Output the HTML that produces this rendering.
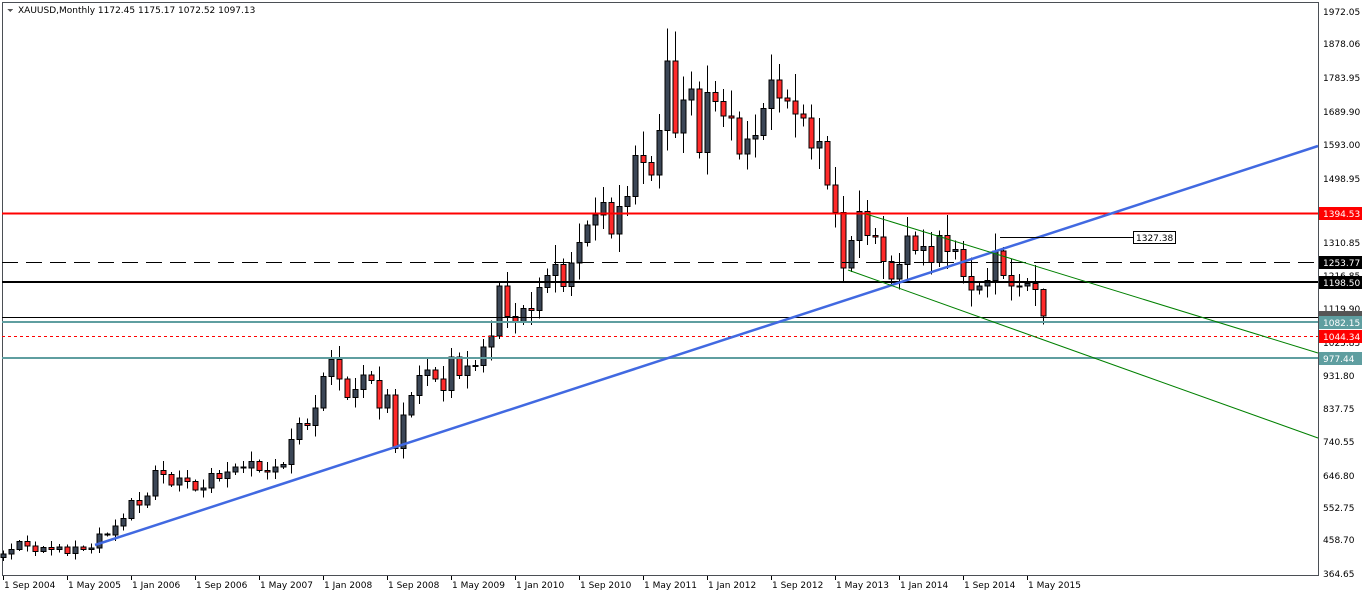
<!DOCTYPE html>
<html><head><meta charset="utf-8">
<style>
html,body{margin:0;padding:0;background:#fff;}
body{width:1362px;height:594px;overflow:hidden;position:relative;font-family:"DejaVu Sans","Liberation Sans",sans-serif;}
svg{position:absolute;left:0;top:0;}
text{font-family:"DejaVu Sans","Liberation Sans",sans-serif;font-size:9px;fill:#000;}
</style></head><body>
<svg id="s" width="1362" height="594" xmlns="http://www.w3.org/2000/svg" shape-rendering="crispEdges">
<rect x="2.5" y="2.5" width="1316" height="573" fill="#fff" stroke="#4b4f55"/>
<g id="candles"></g>
<line x1="2" y1="213.5" x2="1318" y2="213.5" stroke="#ff0000" stroke-width="2"/>
<line x1="2" y1="262.5" x2="1318" y2="262.5" stroke="#000" stroke-dasharray="16,8"/>
<line x1="2" y1="282" x2="1318" y2="282" stroke="#000" stroke-width="2"/>
<line x1="2" y1="317.5" x2="1318" y2="317.5" stroke="#000"/>
<line x1="2" y1="322" x2="1318" y2="322" stroke="#5f9ea0" stroke-width="2"/>
<line x1="2" y1="336.5" x2="1318" y2="336.5" stroke="#ff0000" stroke-dasharray="3,3"/>
<line x1="2" y1="358" x2="1318" y2="358" stroke="#5f9ea0" stroke-width="2"/>
<g shape-rendering="auto">
<line x1="95" y1="545" x2="1318" y2="146" stroke="#4169e1" stroke-width="2.5"/>
<line x1="866" y1="214" x2="1318" y2="353" stroke="#008000" stroke-width="1"/>
<line x1="848" y1="270" x2="1318" y2="438" stroke="#008000" stroke-width="1"/>
</g>
<line x1="1000" y1="237.5" x2="1133" y2="237.5" stroke="#000"/>
<rect x="1133.5" y="231.5" width="42" height="12" fill="#fff" stroke="#000"/>
<text x="1136" y="241">1327.38</text>
<!-- axis -->
<g id="ax" fill="#000">
<text x="1323" y="15">1972.05</text>
<text x="1323" y="47">1878.06</text>
<text x="1323" y="81">1783.95</text>
<text x="1323" y="115">1689.90</text>
<text x="1323" y="148">1593.00</text>
<text x="1323" y="182">1498.95</text>
<text x="1323" y="246">1310.85</text>
<text x="1323" y="279">1216.85</text>
<text x="1323" y="312">1119.90</text>
<text x="1323" y="346">1025.85</text>
<text x="1323" y="379">931.80</text>
<text x="1323" y="412">837.75</text>
<text x="1323" y="445">740.55</text>
<text x="1323" y="479">646.80</text>
<text x="1323" y="511">552.75</text>
<text x="1323" y="543">458.70</text>
<text x="1323" y="577">364.65</text>
</g>
<rect x="1319" y="207" width="43" height="13" fill="#ff0000"/><text x="1323" y="217" style="fill:#fff">1394.53</text>
<rect x="1319" y="256" width="43" height="13" fill="#000"/><text x="1323" y="266" style="fill:#fff">1253.77</text>
<rect x="1319" y="276" width="43" height="13" fill="#000"/><text x="1323" y="286" style="fill:#fff">1198.50</text>
<rect x="1319" y="311" width="43" height="9" fill="#555"/>
<rect x="1319" y="316" width="43" height="13" fill="#5f9ea0"/><text x="1323" y="326" style="fill:#fff">1082.15</text>
<rect x="1319" y="330" width="43" height="13" fill="#ff0000"/><text x="1323" y="340" style="fill:#fff">1044.34</text>
<rect x="1319" y="352" width="43" height="13" fill="#5f9ea0"/><text x="1323" y="362" style="fill:#fff">977.44</text>
<g id="dates"></g>
<path d="M7 9 L13 9 L10 12 Z" fill="#555"/>
<text x="18" y="13">XAUUSD,Monthly  1172.45 1175.17 1072.52 1097.13</text>
</svg>
<script>
var c=[415,428,452,438,422,434,428,435,417,435,429,433,473,470,495,517,568,556,582,654,643,613,633,623,599,604,646,632,650,665,662,680,655,650,665,672,743,789,783,834,923,972,916,864,886,928,912,833,871,718,814,869,927,942,916,884,979,927,954,955,1008,1040,1182,1096,1081,1118,1113,1179,1213,1244,1181,1248,1307,1357,1386,1421,1332,1410,1439,1556,1536,1500,1628,1826,1620,1715,1746,1565,1737,1710,1669,1664,1560,1604,1614,1691,1772,1720,1712,1675,1663,1578,1596,1472,1393,1234,1313,1396,1327,1323,1253,1202,1244,1326,1284,1296,1250,1327,1282,1287,1210,1171,1182,1199,1283,1212,1183,1182,1190,1172,1097];
function Y(p){return 43+(1878.06-p)*0.3494;}
var h='',ns='http://www.w3.org/2000/svg';
for(var i=0;i<c.length;i++){
 var o=i?c[i-1]:405,cl=c[i],x=3+8*i;
 var r=(Math.sin(i*2.3)+1.5)*0.018;
 var hi=Math.max(o,cl)*(1+r),lo=Math.min(o,cl)*(1-r*0.9);
 if(i==83){hi=1920;} if(i==84){hi=1911;}
 if(i==130){o=1172;hi=1175;lo=1072;}
 var yt=Y(Math.max(o,cl)),yb=Y(Math.min(o,cl));if(yb-yt<1)yb=yt+1;
 var col=cl>=o?'#3b4656':'#ff2a2a';
 h+='<line x1="'+(x+.5)+'" y1="'+Y(hi)+'" x2="'+(x+.5)+'" y2="'+Y(lo)+'" stroke="#000"/>';
 h+='<rect x="'+(x-2)+'" y="'+yt+'" width="5" height="'+(yb-yt)+'" fill="'+col+'" stroke="#000"/>';
}
document.getElementById('candles').innerHTML=h;
var d=['1 Sep 2004','1 May 2005','1 Jan 2006','1 Sep 2006','1 May 2007','1 Jan 2008','1 Sep 2008','1 May 2009','1 Jan 2010','1 Sep 2010','1 May 2011','1 Jan 2012','1 Sep 2012','1 May 2013','1 Jan 2014','1 Sep 2014','1 May 2015'];
var t='';
for(var k=0;k<d.length;k++){var x=3+64*k;t+='<line x1="'+(x+.5)+'" y1="576" x2="'+(x+.5)+'" y2="580" stroke="#000"/><text x="'+(x+1)+'" y="588">'+d[k]+'</text>';}
document.getElementById('dates').innerHTML=t;
</script>
</body></html>
